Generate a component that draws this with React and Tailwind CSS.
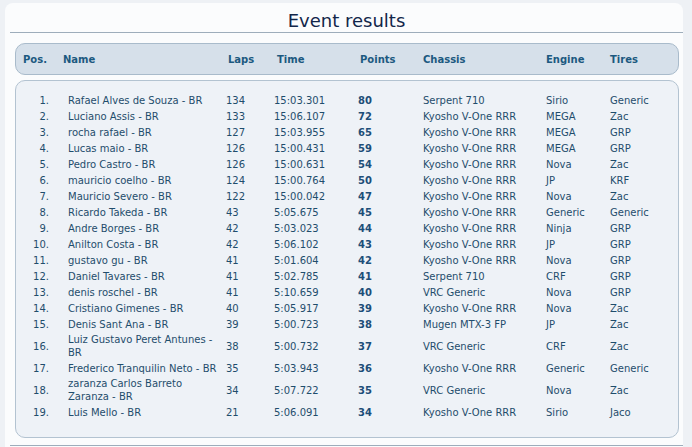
import React from 'react';

const results = [
  { pos: 1, name: 'Rafael Alves de Souza - BR', laps: 134, time: '15:03.301', points: 80, chassis: 'Serpent 710', engine: 'Sirio', tires: 'Generic' },
  { pos: 2, name: 'Luciano Assis - BR', laps: 133, time: '15:06.107', points: 72, chassis: 'Kyosho V-One RRR', engine: 'MEGA', tires: 'Zac' },
  { pos: 3, name: 'rocha rafael - BR', laps: 127, time: '15:03.955', points: 65, chassis: 'Kyosho V-One RRR', engine: 'MEGA', tires: 'GRP' },
  { pos: 4, name: 'Lucas maio - BR', laps: 126, time: '15:00.431', points: 59, chassis: 'Kyosho V-One RRR', engine: 'MEGA', tires: 'GRP' },
  { pos: 5, name: 'Pedro Castro - BR', laps: 126, time: '15:00.631', points: 54, chassis: 'Kyosho V-One RRR', engine: 'Nova', tires: 'Zac' },
  { pos: 6, name: 'mauricio coelho - BR', laps: 124, time: '15:00.764', points: 50, chassis: 'Kyosho V-One RRR', engine: 'JP', tires: 'KRF' },
  { pos: 7, name: 'Mauricio Severo - BR', laps: 122, time: '15:00.042', points: 47, chassis: 'Kyosho V-One RRR', engine: 'Nova', tires: 'Zac' },
  { pos: 8, name: 'Ricardo Takeda - BR', laps: 43, time: '5:05.675', points: 45, chassis: 'Kyosho V-One RRR', engine: 'Generic', tires: 'Generic' },
  { pos: 9, name: 'Andre Borges - BR', laps: 42, time: '5:03.023', points: 44, chassis: 'Kyosho V-One RRR', engine: 'Ninja', tires: 'GRP' },
  { pos: 10, name: 'Anilton Costa - BR', laps: 42, time: '5:06.102', points: 43, chassis: 'Kyosho V-One RRR', engine: 'JP', tires: 'GRP' },
  { pos: 11, name: 'gustavo gu - BR', laps: 41, time: '5:01.604', points: 42, chassis: 'Kyosho V-One RRR', engine: 'Nova', tires: 'GRP' },
  { pos: 12, name: 'Daniel Tavares - BR', laps: 41, time: '5:02.785', points: 41, chassis: 'Serpent 710', engine: 'CRF', tires: 'GRP' },
  { pos: 13, name: 'denis roschel - BR', laps: 41, time: '5:10.659', points: 40, chassis: 'VRC Generic', engine: 'Nova', tires: 'GRP' },
  { pos: 14, name: 'Cristiano Gimenes - BR', laps: 40, time: '5:05.917', points: 39, chassis: 'Kyosho V-One RRR', engine: 'Nova', tires: 'Zac' },
  { pos: 15, name: 'Denis Sant Ana - BR', laps: 39, time: '5:00.723', points: 38, chassis: 'Mugen MTX-3 FP', engine: 'JP', tires: 'Zac' },
  { pos: 16, name: 'Luiz Gustavo Peret Antunes - BR', laps: 38, time: '5:00.732', points: 37, chassis: 'VRC Generic', engine: 'CRF', tires: 'Zac' },
  { pos: 17, name: 'Frederico Tranquilin Neto - BR', laps: 35, time: '5:03.943', points: 36, chassis: 'Kyosho V-One RRR', engine: 'Generic', tires: 'Generic' },
  { pos: 18, name: 'zaranza Carlos Barreto Zaranza - BR', laps: 34, time: '5:07.722', points: 35, chassis: 'VRC Generic', engine: 'Nova', tires: 'Zac' },
  { pos: 19, name: 'Luis Mello - BR', laps: 21, time: '5:06.091', points: 34, chassis: 'Kyosho V-One RRR', engine: 'Sirio', tires: 'Jaco' },
];

const App = () => {
  return (
    <div className="w-[692px] h-[447px] bg-[#eef1f5] overflow-hidden" style={{ fontFamily: '"DejaVu Sans", Verdana, sans-serif' }}>
      <div className="ml-[5px] mt-[3px] w-[678px] h-[450px] bg-[#fbfcfd] rounded-tl-[8px] rounded-tr-[8px] pt-[7px]">
        <h1 className="text-center text-[18px] leading-[22px] text-[#12264a] ml-[5px] w-[673px]">Event results</h1>
        <div className="ml-[5px] h-px bg-[#9eadbb]" />

        <div className="ml-[10px] mt-[10px] w-[664px] h-[32px] rounded-[10px] border border-[#a9bbcb] bg-[#d6e0ea] grid grid-cols-[43px_165px_49px_83px_63px_123px_64px_1fr] items-center text-[10px] font-bold text-[#1c5980]">
          <div className="pl-[7px]">Pos.</div>
          <div className="pl-[4px]">Name</div>
          <div className="pl-[4px]">Laps</div>
          <div className="pl-[4px]">Time</div>
          <div className="pl-[4px]">Points</div>
          <div className="pl-[4px]">Chassis</div>
          <div className="pl-[4px]">Engine</div>
          <div className="pl-[4px]">Tires</div>
        </div>

        <div className="ml-[10px] mt-[5px] w-[664px] h-[358px] rounded-[10px] border border-[#b3c3d1] bg-[#eef2f7] pt-[11px] text-[10px] text-[#1f4d6c]">
          {results.map((r) => (
            <div key={r.pos} className="grid grid-cols-[48px_158px_48px_84px_65px_123px_64px_1fr] items-center leading-[13px] min-h-[16px] py-[1px]">
              <div className="text-right pr-[15px]">{r.pos}.</div>
              <div className="pl-[4px]">{r.name}</div>
              <div className="pl-[4px]">{r.laps}</div>
              <div className="pl-[4px]">{r.time}</div>
              <div className="pl-[4px] font-bold text-[#1d4e78]">{r.points}</div>
              <div className="pl-[4px]">{r.chassis}</div>
              <div className="pl-[4px]">{r.engine}</div>
              <div className="pl-[4px]">{r.tires}</div>
            </div>
          ))}
        </div>

        <div className="ml-[5px] mt-[7px] h-px bg-[#9eadbb]" />
      </div>
    </div>
  );
};

export default App;
